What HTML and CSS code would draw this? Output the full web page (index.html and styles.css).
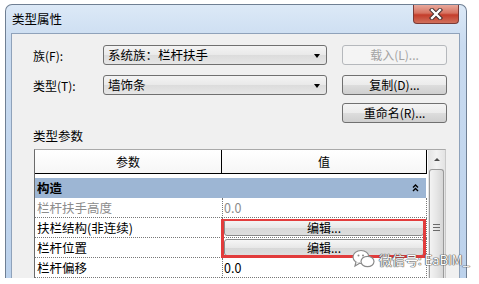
FILE: index.html
```html
<!DOCTYPE html>
<html lang="zh">
<head>
    <meta charset="UTF-8">
    <title>类型属性</title>
    <link rel="stylesheet" href="styles.css">
</head>
<body>
    <div class="window">
        <div class="titlebar">
            <span class="title">类型属性</span>
            <div class="close">
                <svg width="16" height="12" viewBox="0 0 16 12">
                    <path d="M4 2 L12 10 M12 2 L4 10" stroke="#3a2a2a" stroke-width="4.2" stroke-linecap="square"/>
                    <path d="M4 2 L12 10 M12 2 L4 10" stroke="#fff" stroke-width="2.4" stroke-linecap="square"/>
                </svg>
            </div>
        </div>
        <div class="frame">
            <div class="client">
                <div class="form-row">
                    <span class="label">族(F):</span>
                    <div class="combo">系统族：栏杆扶手<span class="arrow"></span></div>
                    <div class="btn disabled">载入(L)...</div>
                </div>
                <div class="form-row row2">
                    <span class="label">类型(T):</span>
                    <div class="combo">墙饰条<span class="arrow"></span></div>
                    <div class="btn">复制(D)...</div>
                </div>
                <div class="form-row row3">
                    <div class="btn">重命名(R)...</div>
                </div>
                <div class="section-label">类型参数</div>
                <div class="grid-wrap">
                    <div class="props">
                        <div class="head">参数</div>
                        <div class="head">值</div>
                        <div class="category">构造
                            <svg class="collapse" width="7" height="8" viewBox="0 0 7 8">
                                <path d="M1 3.5 L3.5 1 L6 3.5 M1 7 L3.5 4.5 L6 7" fill="none" stroke="#000" stroke-width="1.4"/>
                            </svg>
                        </div>
                        <div class="cell line-1 muted">栏杆扶手高度</div>
                        <div class="cell val line-1 muted">0.0</div>
                        <div class="cell line-2">扶栏结构(非连续)</div>
                        <div class="cell val line-2"><div class="edit">编辑...</div></div>
                        <div class="cell line-3">栏杆位置</div>
                        <div class="cell val line-3"><div class="edit">编辑...</div></div>
                        <div class="cell line-4">栏杆偏移</div>
                        <div class="cell val line-4">0.0</div>
                        <div class="mark"></div>
                    </div>
                    <div class="scrollbar">
                        <div class="up"></div>
                        <div class="thumb"><span class="grip"></span></div>
                    </div>
                </div>
            </div>
        </div>
    </div>
    <div class="watermark">
        <svg width="24" height="20" viewBox="0 0 24 20">
            <ellipse cx="9" cy="8" rx="8" ry="6.5" fill="#fff" stroke="#8a8a8a" stroke-width="1.2"/>
            <path d="M4 13 L3 17 L8 14" fill="#fff" stroke="#8a8a8a" stroke-width="1.2"/>
            <ellipse cx="15.5" cy="12.5" rx="6.5" ry="5.2" fill="#fff" stroke="#8a8a8a" stroke-width="1.2"/>
            <circle cx="6.5" cy="6.5" r="1" fill="#8a8a8a"/>
            <circle cx="11" cy="6.5" r="1" fill="#8a8a8a"/>
        </svg>
        <span>微信号: EaBIM_</span>
    </div>
</body>
</html>
```

FILE: styles.css
```css
body {
    margin: 0;
    background: #fff;
    font-family: "Noto Sans CJK SC", "DejaVu Sans", sans-serif;
    font-size: 12px;
    color: #000;
    position: relative;
    height: 284px;
    overflow: hidden;
}
.window {
    margin: 4px 0 0 5px;
    width: 460px;
    height: 273px;
    border: 1px solid #6f7f93;
    border-bottom: none;
    border-radius: 7px 7px 0 0;
    background: linear-gradient(to bottom, #dce9f7, #c9dbf0 40px, #bcd2ec);
    overflow: hidden;
}
.titlebar {
    height: 28px;
    display: flex;
    align-items: flex-start;
    justify-content: space-between;
}
.title {
    margin: 6px 0 0 6px;
    font-size: 12.5px;
    line-height: 16px;
}
.close {
    width: 44px;
    height: 18px;
    margin-right: 7px;
    border: 1px solid #7a3a36;
    border-top: none;
    border-radius: 0 0 4px 4px;
    background: linear-gradient(to bottom, #e9a99c, #d67260 45%, #c43d2b 55%, #d0705c);
    display: flex;
    align-items: center;
    justify-content: center;
}
.frame {
    padding: 0 6px 0 5px;
    height: 245px;
}
.client {
    height: 100%;
    background: #f0f0f0;
    border: 1px solid #8fa2ba;
    border-bottom: none;
    padding: 11px 12px 0 21px;
    box-sizing: border-box;
}
.form-row {
    display: flex;
    align-items: center;
    height: 20px;
}
.row2 {
    margin-top: 10px;
}
.row3 {
    margin-top: 8px;
    justify-content: flex-end;
}
.label {
    width: 70px;
    font-size: 12px;
}
.combo {
    width: 224px;
    height: 20px;
    box-sizing: border-box;
    border: 1px solid #707070;
    border-radius: 3px;
    background: linear-gradient(to bottom, #f4f4f4, #e9e9e9 50%, #dcdcdc 51%, #e6e6e6);
    padding-left: 4px;
    line-height: 18px;
    position: relative;
    font-size: 12.5px;
}
.arrow {
    position: absolute;
    right: 6px;
    top: 8px;
    border-left: 3.5px solid transparent;
    border-right: 3.5px solid transparent;
    border-top: 4px solid #000;
}
.btn {
    width: 105px;
    height: 20px;
    box-sizing: border-box;
    margin-left: 15px;
    border: 1px solid #707070;
    border-radius: 3px;
    background: linear-gradient(to bottom, #f4f4f4, #ebebeb 50%, #dddddd 51%, #cfcfcf);
    text-align: center;
    line-height: 18px;
    font-size: 12px;
}
.btn.disabled {
    color: #a3a3a3;
    border-color: #b5b8bc;
    background: #f4f4f4;
}
.section-label {
    margin-top: 6px;
    line-height: 14px;
    font-size: 12.5px;
}
.grid-wrap {
    margin: 6px 0 0 1px;
    width: 412px;
    height: 140px;
    box-sizing: border-box;
    display: flex;
    border-left: 1px solid #6a6a6a;
    border-top: 1px solid #a9a9a9;
    border-right: 1px solid #c9c9c9;
    background: #fff;
}
.props {
    width: 392px;
    display: grid;
    grid-template-columns: 187px 205px;
    grid-template-rows: 24px 24px 20px 20px 20px 20px;
    align-content: start;
}
.head {
    grid-row: 1;
    border-bottom: 1px solid #000;
    border-right: 1px solid #000;
    background: linear-gradient(to bottom, #fff, #f6f6f6);
    text-align: center;
    line-height: 23px;
    font-size: 12px;
}
.category {
    grid-row: 2;
    grid-column: 1 / 3;
    margin: 4px 1px 0 0;
    background: #9db6d4;
    font-weight: bold;
    padding-left: 2px;
    line-height: 20px;
    font-size: 12.5px;
    display: flex;
    justify-content: space-between;
    align-items: center;
    padding-right: 7px;
}
.cell {
    grid-column: 1;
    border-bottom: 1px dotted #777;
    padding-left: 2px;
    line-height: 19px;
    font-size: 12.5px;
    white-space: nowrap;
}
.cell.val {
    grid-column: 2;
    border-left: 1px dotted #777;
    border-right: 1px dotted #777;
    padding: 0 2px 0 1px;
}
.line-1 {
    grid-row: 3;
}
.line-2 {
    grid-row: 4;
}
.line-3 {
    grid-row: 5;
}
.line-4 {
    grid-row: 6;
}
.muted {
    color: #8c8c8c;
}
.edit {
    margin-top: 1px;
    height: 17px;
    box-sizing: border-box;
    border: 1px solid #8a8a8a;
    border-radius: 3px;
    background: linear-gradient(to bottom, #f6f6f6, #e8e8e8 50%, #d8d8d8 51%, #dedede);
    text-align: center;
    line-height: 15px;
    font-size: 12px;
    color: #000;
}
.mark {
    grid-column: 2;
    grid-row: 4 / span 2;
    margin: 1px 1px 0 -1px;
    border: 3px solid #e23c3c;
    border-top-width: 2.5px;
}
.scrollbar {
    width: 17px;
    margin-left: 1px;
    background: linear-gradient(to right, #e3e3e3, #f2f2f2 50%, #e3e3e3);
    display: flex;
    flex-direction: column;
    align-items: center;
}
.up {
    margin-top: 8px;
    border-left: 3px solid transparent;
    border-right: 3px solid transparent;
    border-bottom: 3px solid #4d4d4d;
}
.thumb {
    margin-top: 8px;
    width: 15px;
    flex: 1;
    box-sizing: border-box;
    border: 1px solid #9a9a9a;
    border-bottom: none;
    border-radius: 3px 3px 0 0;
    background: linear-gradient(to right, #f3f3f3, #e6e6e6 50%, #d6d6d6);
    display: flex;
    justify-content: center;
}
.grip {
    margin-top: 54px;
    width: 7px;
    height: 7px;
    border-top: 1px solid #6a6a6a;
    border-bottom: 1px solid #6a6a6a;
    background: linear-gradient(#6a6a6a, #6a6a6a) center / 7px 1px no-repeat;
    box-sizing: border-box;
}
.watermark {
    position: absolute;
    left: 352px;
    top: 249px;
    display: flex;
    align-items: center;
    gap: 3px;
    font-size: 13px;
    color: #fff;
    text-shadow: 0 0 1px #555, 0 0 1px #555, 0 0 1px #555, 0 0 1px #555;
}
```
